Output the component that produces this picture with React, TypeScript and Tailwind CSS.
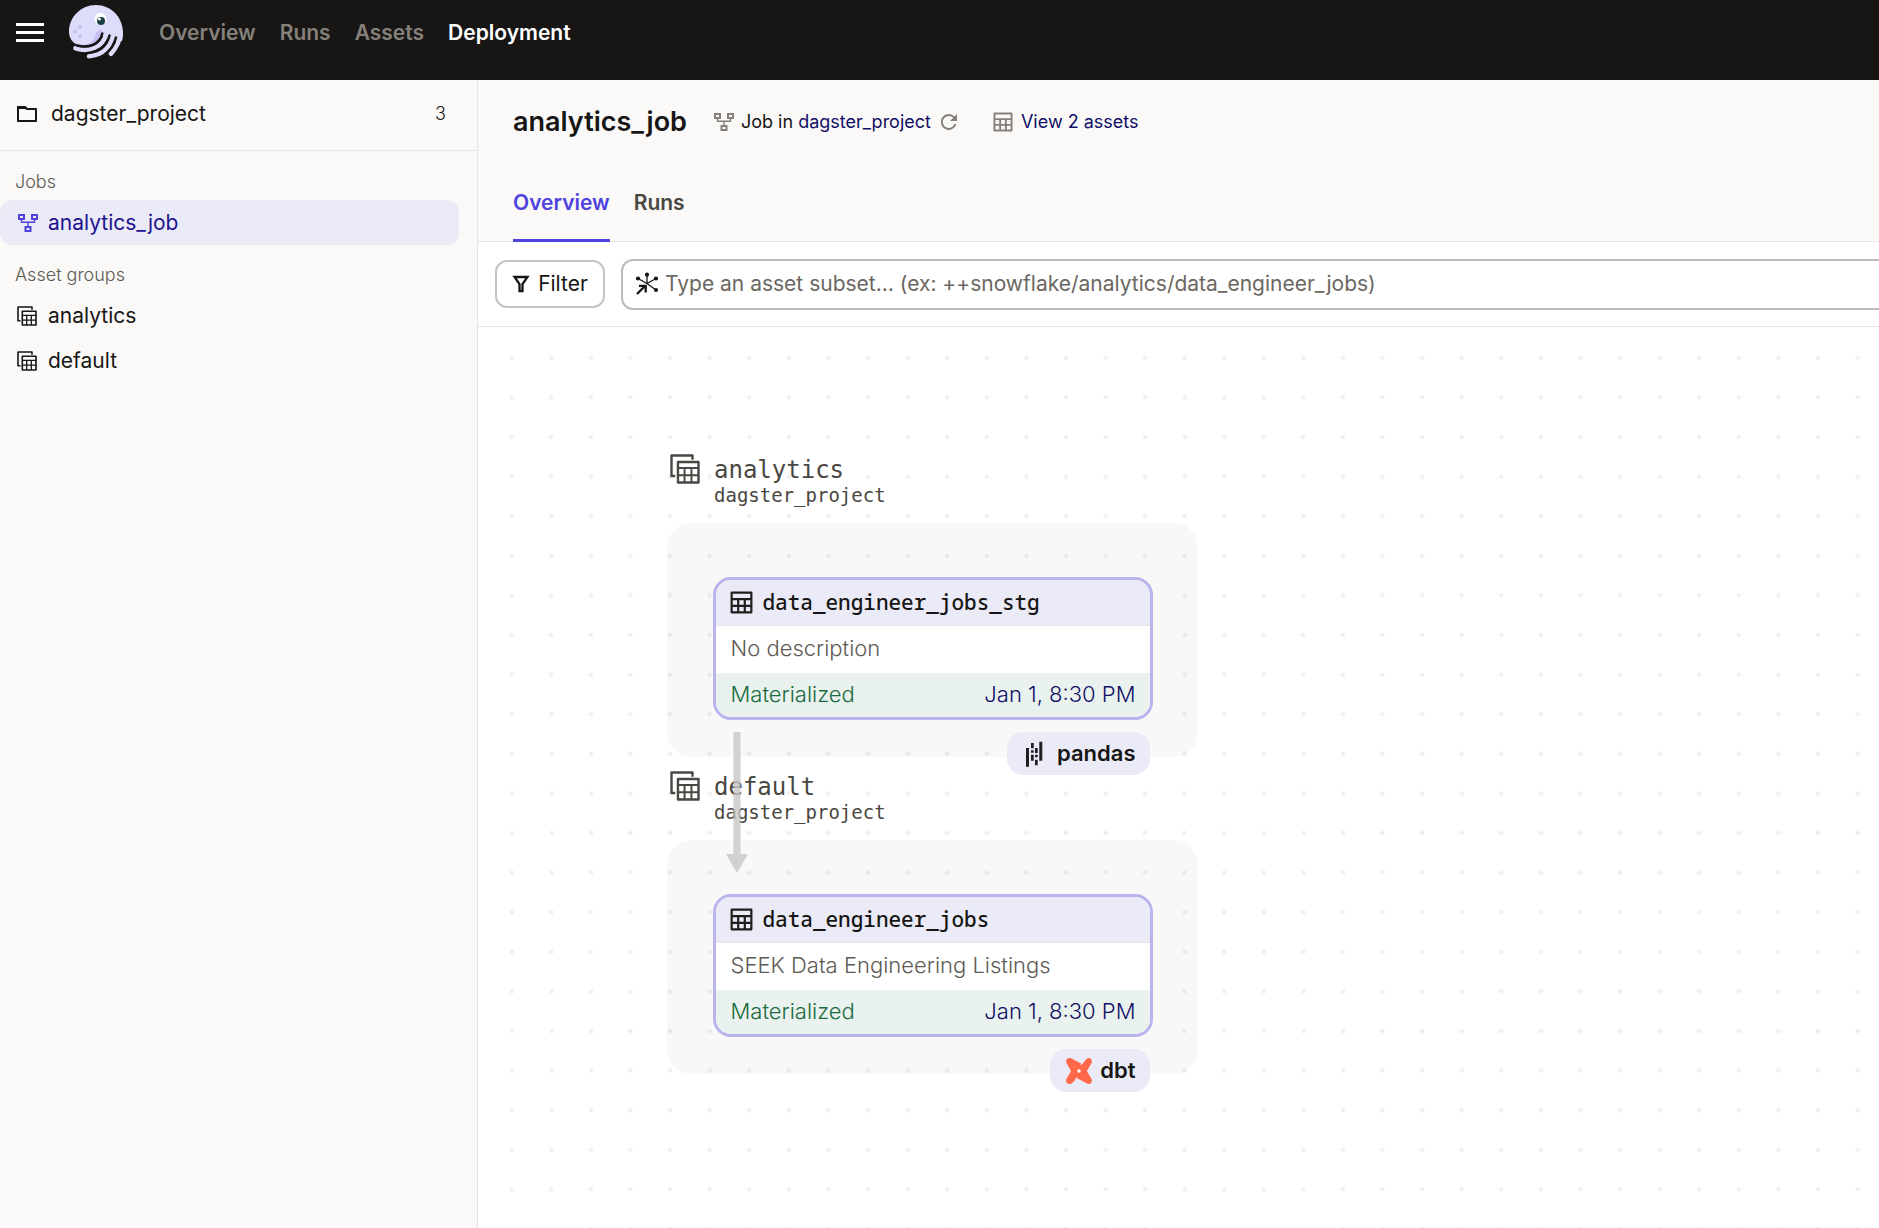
import React from "react";

const GRID = "M3 3h18v18H3z M3 9h18 M3 15h18 M9 9v12 M15 9v12";

function TableIcon({ className }: { className: string }) {
  return (
    <svg viewBox="1.500 1.500 21 21" fill="none" stroke="currentColor" strokeWidth="2" strokeLinejoin="round" className={className} aria-hidden="true">
      <path d={GRID} />
    </svg>
  );
}

function GroupIcon({ className }: { className: string }) {
  return (
    <svg viewBox="0 0 20 20" fill="none" stroke="currentColor" strokeLinejoin="round" className={className} aria-hidden="true">
      <path strokeWidth="1.600" d="M3.500 14.700H1V1h14v2.800" />
      <path strokeWidth="1.600" d="M5.300 5.300h13.700v13.700H5.300z" />
      <path strokeWidth="1.300" d="M5.300 9.300h14 M5.300 14.100h14 M9.700 9.300V19 M14.300 9.300V19" />
    </svg>
  );
}

function JobIcon({ className }: { className: string }) {
  return (
    <svg viewBox="0 0 20 18" fill="none" stroke="currentColor" className={className} aria-hidden="true">
      <path strokeWidth="2" d="M1 1h5v4H1z M14 1h5v4h-5z M7.500 13h5v4h-5z" />
      <path strokeWidth="1.400" d="M3.500 5v3.300h13V5 M10 8.300V13" />
    </svg>
  );
}

function Logo() {
  return (
    <svg viewBox="0 0 54 54" className="h-[54px] w-[54px]" fill="none" aria-hidden="true">
      <path fill="#dedcfb" d="M0 27C0 12 12 0 27 0s27 12 27 28c0 3-.300 5-1 8H40L30 28C30 36 24 41 16 41 6 41 0 35 0 27Z" />
      <path fill="#c6c1f4" d="M2.500 35.500c5 4.500 13 6 19 2 6-4 4-10 8-12 3-1.500 5 0 4 3-2.500 8-8 12.500-16 12.500-7 0-12-2-15-5.500Z" />
      <g stroke="#dedcfb" strokeLinecap="round" strokeWidth="4.600">
        <path d="M6.500 43.200C21 48 34 42 37 29" />
        <path d="M20 51.200C34 50 42 42 44 29" />
        <path d="M42 48.800C47 43 50.500 37 51.500 29" />
      </g>
      <g stroke="#171615" strokeLinecap="round" strokeWidth="2.500">
        <path d="M8 40.500C20 43.500 31 39 33.300 28.500" />
        <path d="M17 48.300C29 47 38 41 40.500 30.500" />
        <path d="M35 50.200C42 45 45.500 39 47 32.500" />
      </g>
      <circle cx="31.500" cy="14" r="6" fill="#fff" />
      <circle cx="32" cy="16" r="4" fill="#193f43" />
      <circle cx="30.500" cy="14" r="1.500" fill="#fff" />
      <g fill="#c6c1f4">
        <circle cx="11" cy="22" r="2" />
        <circle cx="6" cy="26.500" r="2" />
        <circle cx="11" cy="31" r="2" />
      </g>
    </svg>
  );
}

function PandasIcon() {
  return (
    <svg viewBox="0 0 26 26" className="h-[26px] w-[26px]" fill="#231f20" aria-hidden="true">
      <path d="M3 7h3v18.700H3z M8 2h2.700v5.300H8z M8 9.300h2.700v2.400H8z M8 13.700h2.700v6H8z M12 7h2.700v5H12z M12 13.700h2.700v2.600H12z M12 18.700h2.700v5.600H12z M16.300.700h3v19h-3z" />
    </svg>
  );
}

function DbtIcon() {
  return (
    <svg viewBox="0 0 26 26" className="h-[26px] w-[26px]" aria-hidden="true">
      <path fill="#ff694a" d="M1 1C2.500-.400 4.500-.200 6 .700L13 4.500c1.500.800 3 .800 4.500 0L21 .600c1.500-.900 3-.700 4 .400s1.200 3 .400 4.300L21.500 12c-.500.800-.500 1.500 0 2.300l4 6.500c.800 1.400.600 3-.500 4.200s-2.800 1.300-4 .500L13.500 21.500c-1.500-.800-3-.500-4 .500L5.500 25.400c-1.500.900-3.300.700-4.500-.400s-1.200-3-.400-4.400L4.500 14c.400-.700.400-1.400 0-2L.600 5.200C-.200 3.800 0 2.100 1 1Z" />
      <path stroke="#ebebf7" strokeWidth="1.200" strokeLinecap="round" d="M17 4.800l-2.200 1.400 M9.600 21.500l1.600-1.700" />
      <circle cx="13" cy="13" r="1.700" fill="#fff" />
    </svg>
  );
}

function AssetNode({ name, description, tag, icon }: { name: string; description: string; tag: string; icon: React.ReactNode }) {
  return (
    <article className="flex w-[440px] flex-col items-end gap-3">
      <div className="w-full shrink-0 overflow-hidden rounded-[18px] border-[3px] border-[#b9b3ee] bg-white text-[22px] leading-7 font-light">
        <div className="flex h-[46px] items-center gap-[10px] border-b border-[#e4e3ea] bg-[#ebebf7] px-[14px]">
          <TableIcon className="h-[23px] w-[23px] text-[#1f1e1c]" />
          <h3 className="pb-[2px] font-['Noto_Sans_Mono','DejaVu_Sans_Mono',monospace] text-[21px] font-medium text-[#171615]">{name}</h3>
        </div>
        <p className="h-[47px] px-[15px] py-2 text-[#5d5a55]">{description}</p>
        <div className="flex h-11 items-center justify-between bg-[#eaf2ef] pr-[14px] pb-[2px] pl-[15px]">
          <span className="text-[#1a6b40]">Materialized</span>
          <a href="#run" className="text-[#110f66]">Jan 1, 8:30 PM</a>
        </div>
      </div>
      <div className="mr-[3px] flex h-[43px] shrink-0 items-center gap-2 rounded-2xl bg-[#ebebf7] pr-[14px] pl-4 text-[22px] font-semibold text-[#171615]">
        {icon}
        {tag}
      </div>
    </article>
  );
}

function AssetGroup({ name, children }: { name: string; children: React.ReactNode }) {
  return (
    <section className="w-[531px]">
      <header className="flex h-[71px] gap-[14px] pt-[2px] pl-[3px] font-['DejaVu_Sans_Mono',monospace] text-[#494742]">
        <GroupIcon className="h-[30px] w-[30px]" />
        <div className="pt-[2px]">
          <h2 className="text-2xl leading-7">{name}</h2>
          <p className="text-[19px] leading-[22px]">dagster_project</p>
        </div>
      </header>
      <div className="flex h-[234px] justify-center rounded-3xl bg-[#00000007] pt-[54px]">{children}</div>
    </section>
  );
}

const navItems = ["Overview", "Runs", "Assets", "Deployment"];
const groups = ["analytics", "default"];

export default function App() {
  return (
    <div className="flex min-h-screen flex-col overflow-x-hidden bg-white font-['Inter',sans-serif] text-[#171615]">
      <header className="flex h-20 items-start bg-[#171615] pl-4">
        <button type="button" aria-label="Menu" className="mt-[23px] flex w-7 flex-col gap-[5px]">
          <span className="h-[3px] w-full bg-white" />
          <span className="h-[3px] w-full bg-white" />
          <span className="h-[3px] w-full bg-white" />
        </button>
        <a href="#home" aria-label="Home" className="mt-[5px] ml-[25px]">
          <Logo />
        </a>
        <nav className="mt-[19px] ml-9 flex gap-6 text-[21px] leading-7 font-semibold">
          {navItems.map((item) => (
            <a key={item} href={"#" + item} className={item === "Deployment" ? "text-white" : "text-[#85817a]"}>
              {item}
            </a>
          ))}
        </nav>
      </header>

      <div className="flex flex-1">
        <aside className="w-[478px] shrink-0 border-r border-[#e6e5e3] bg-[#faf9f7]">
          <div className="flex h-[71px] items-center border-b border-[#e6e5e3] pr-[31px] pb-[2px] pl-4">
            <svg viewBox="0 0 22 20" className="h-5 w-[22px]" fill="none" stroke="currentColor" strokeWidth="2" aria-hidden="true">
              <path strokeLinejoin="round" d="M2 3h7l2 2h9v12H2z" />
              <path fill="currentColor" stroke="none" d="M1 2h8l3 3H1z" />
            </svg>
            <span className="ml-[13px] flex-1 text-[21px]">dagster_project</span>
            <span className="text-lg font-light">3</span>
          </div>
          <h2 className="mt-[19px] pl-[15px] text-lg leading-6 font-light text-[#5d5a55]">Jobs</h2>
          <a href="#job" className="mt-[6px] mr-[18px] flex h-[45px] items-center gap-[10px] rounded-xl bg-[#ebebf7] pl-[18px] text-[21px] text-[#1d1390]">
            <JobIcon className="h-[18px] w-5 text-[#4f43dd]" />
            analytics_job
          </a>
          <h2 className="mt-[18px] pl-[15px] text-lg leading-6 font-light text-[#5d5a55]">Asset groups</h2>
          <div className="mt-[6px]">
            {groups.map((g) => (
              <a key={g} href={"#" + g} className="flex h-[45px] items-center gap-[11px] pl-[17px] text-[21px]">
                <GroupIcon className="h-5 w-5" />
                {g}
              </a>
            ))}
          </div>
        </aside>

        <main className="flex min-w-0 flex-1 flex-col">
          <div className="h-[162px] border-b border-[#e6e5e3] bg-[#faf9f7] px-[35px] pt-6">
            <div className="flex h-9 items-center text-lg whitespace-nowrap">
              <h1 className="text-[27px] font-semibold">analytics_job</h1>
              <JobIcon className="ml-[27px] h-[18px] w-5 text-[#85817a]" />
              <span className="ml-[7px]">
                Job in <a href="#project" className="text-[#110f66]">dagster_project</a>
              </span>
              <button type="button" aria-label="Reload" className="ml-[9px] text-[#85817a]">
                <svg viewBox="0 0 18 18" className="h-[18px] w-[18px]" fill="none" stroke="currentColor" strokeWidth="2" aria-hidden="true">
                  <path d="M15.500 11A7 7 0 1 1 14 4.200L16 6.200" />
                  <path fill="currentColor" stroke="none" d="M17 1v7h-7z" />
                </svg>
              </button>
              <TableIcon className="ml-[35px] h-5 w-5 text-[#85817a]" />
              <a href="#assets" className="ml-2 text-[#110f66]">View 2 assets</a>
            </div>
            <div className="mt-[31px] flex gap-6 text-[21px] leading-7 font-semibold">
              <a href="#overview" className="h-[71px] border-b-[3px] border-[#4f43dd] pt-[18px] text-[#4f43dd]">Overview</a>
              <a href="#runs" className="pt-[18px] text-[#494742]">Runs</a>
            </div>
          </div>

          <div className="flex h-[85px] items-center gap-4 border-b border-[#e6e5e3] pl-[17px]">
            <button type="button" className="flex h-12 w-[110px] shrink-0 items-center justify-center gap-2 rounded-xl border-2 border-[#c6c4c2] text-[21px]">
              <svg viewBox="0 0 18 18" className="h-[18px] w-[18px]" fill="none" stroke="currentColor" strokeWidth="2.300" aria-hidden="true">
                <path d="M2.500 2h13l-5 7.200V16h-3V9.200z" />
              </svg>
              Filter
            </button>
            <label className="-mr-4 flex h-[51px] min-w-0 flex-1 items-center gap-[6px] rounded-xl border-2 border-[#bdbbb9] pl-3">
              <svg viewBox="0 0 24 24" className="h-6 w-6 shrink-0" fill="none" stroke="currentColor" strokeWidth="1.300" aria-hidden="true">
                <path d="M12 3v8.500 M3 6.500l9 5 9-5 M12 11.500l9 6.500" />
                <path strokeWidth="2.300" d="M2 22l8.500-8.500 M4 13.800h6.700v6.700" />
                <g fill="currentColor" stroke="none">
                  <circle cx="12" cy="2.700" r="2.100" />
                  <circle cx="3" cy="6.500" r="2.100" />
                  <circle cx="21" cy="6.500" r="2.100" />
                  <circle cx="21" cy="18" r="2.100" />
                </g>
              </svg>
              <input aria-label="Asset subset" placeholder="Type an asset subset… (ex: ++snowflake/analytics/data_engineer_jobs)" className="min-w-0 flex-1 bg-transparent text-[21px] outline-none placeholder:text-[#6b6762]" />
            </label>
          </div>

          <div className="relative flex-1 overflow-hidden">
            <svg className="absolute inset-0 h-full w-full" aria-hidden="true">
              <defs>
                <pattern id="dots" width="39.580" height="39.600" patternUnits="userSpaceOnUse" x="14" y="11">
                  <circle cx="19.800" cy="19.800" r="2.300" fill="#f0f0ef" />
                </pattern>
              </defs>
              <rect width="100%" height="100%" fill="url(#dots)" />
            </svg>
            <div className="absolute top-[125px] left-[189px] flex flex-col gap-3">
              <AssetGroup name="analytics">
                <AssetNode name="data_engineer_jobs_stg" description="No description" tag="pandas" icon={<PandasIcon />} />
              </AssetGroup>
              <AssetGroup name="default">
                <AssetNode name="data_engineer_jobs" description="SEEK Data Engineering Listings" tag="dbt" icon={<DbtIcon />} />
              </AssetGroup>
            </div>
            <svg viewBox="0 0 22 142" className="absolute top-[405px] left-[248px] h-[142px] w-[22px] opacity-80" fill="#c9c8c6" aria-hidden="true">
              <path d="M7.500 0h7v122H22L11 141 0 122h7.500z" />
            </svg>
          </div>
        </main>
      </div>
    </div>
  );
}
